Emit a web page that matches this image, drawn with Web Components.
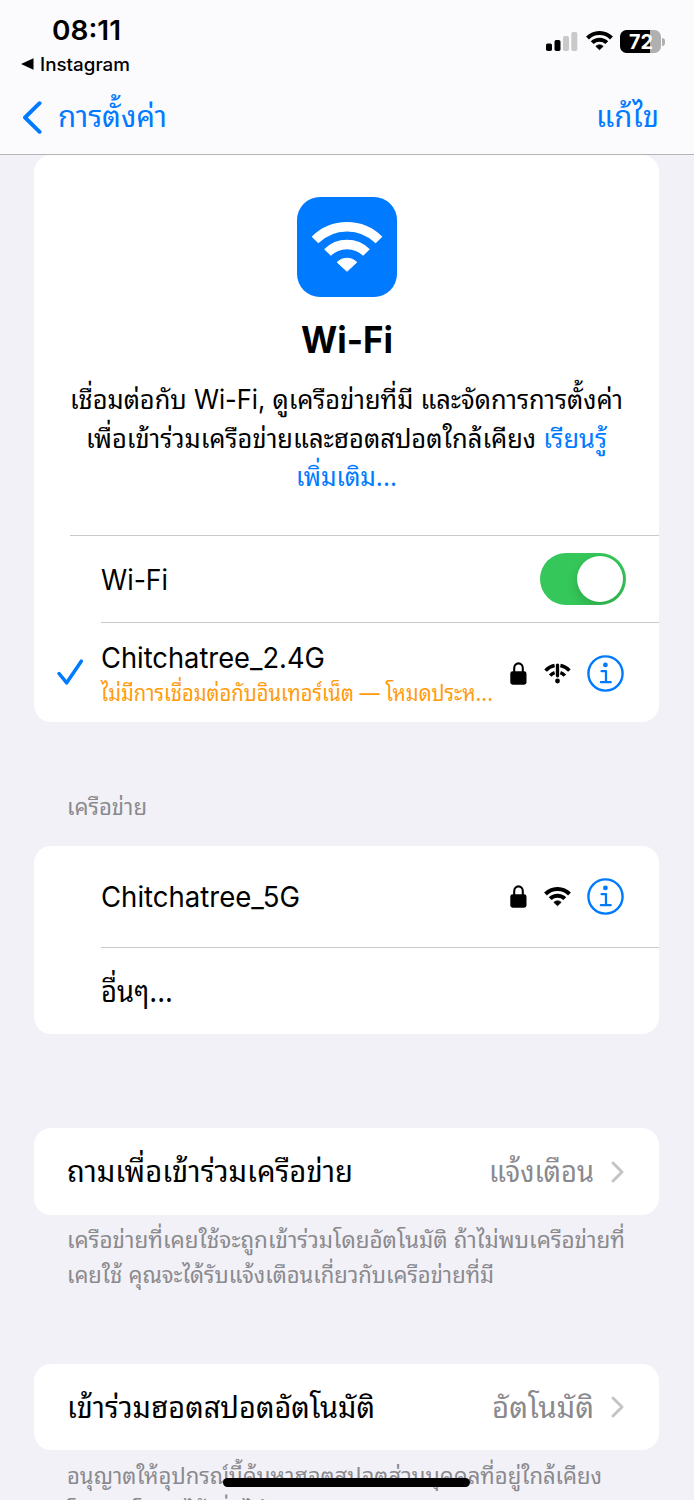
<!DOCTYPE html>
<html lang="th">
<head>
<meta charset="utf-8">
<title>Wi-Fi</title>
<style>
html,body{margin:0;padding:0;background:#f2f1f7;overflow:hidden}
body{height:1500px;width:694px}
</style>
</head>
<body>
<settings-app></settings-app>
<script>
const define = (name, html, init) => {
  const t = document.createElement('template');
  t.innerHTML = html;
  customElements.define(name, class extends HTMLElement {
    connectedCallback() {
      if (this.shadowRoot) return;
      this.attachShadow({mode: 'open'}).append(t.content.cloneNode(true));
      if (init) init(this, this.shadowRoot);
    }
  });
};

/* One line of text on a fixed baseline: base = distance from the box top, w = advance width. */
define('text-line', `<style>
:host{display:flex;align-items:baseline;white-space:nowrap;line-height:0;flex:none}
i{flex:none;width:0}
span{display:block;flex:none;transform-origin:0 0;white-space:pre}
</style><i></i><span><slot></slot></span>`, (el, root) => {
  const span = root.querySelector('span');
  const w = +el.getAttribute('w');
  root.querySelector('i').style.height = el.getAttribute('base') + 'px';
  el.style.height = (el.getAttribute('h') || el.getAttribute('base')) + 'px';
  el.style.fontSize = el.getAttribute('size') + 'px';
  el.style.width = w + 'px';
  span.style.transform = 'scaleX(' + w / span.getBoundingClientRect().width + ')';
});

define('wifi-glyph', `<style>:host{display:block;width:27px;height:20px;flex:none}svg{display:block;width:100%;height:100%}
path{stroke-width:10.8}.dot{stroke-width:2}
:host([large]) path{stroke-width:9.4}:host([large]) .dot{stroke-width:1}</style>
<svg viewBox="-36 -50 72 52" fill="none" stroke="currentColor">
<path d="M-32 -32A45.2 45.2 0 0 1 32 -32"/><path d="M-19.5 -19.5A27.6 27.6 0 0 1 19.5 -19.5"/>
<path class="dot" stroke-linejoin="round" fill="currentColor" d="M-9.8 -9.8A14 14 0 0 1 9.8 -9.8L0 -.7Z"/></svg>`);

define('wifi-alert-glyph', `<style>:host{display:block;width:27px;height:21px;flex:none}svg{display:block}</style>
<svg width="27" height="21" viewBox="0 0 27 21" fill="none" stroke="#000">
<g stroke-width="3.5"><path d="M1.6 7.6Q5.4 3.5 10.6 2.5M25.4 7.6Q21.6 3.5 16.4 2.5"/><path d="M6.2 12.6Q8 10.5 10.6 9.6M20.8 12.6Q19 10.5 16.4 9.6"/></g>
<path stroke-width="3.3" stroke-linecap="round" d="M13.5 2.1V12.8"/><circle cx="13.5" cy="18" r="2.4" fill="#000" stroke="none"/></svg>`);

define('lock-glyph', `<style>:host{display:block;width:17px;height:23px;flex:none}svg{display:block}</style>
<svg width="17" height="23" viewBox="0 0 17 23"><path d="M4.2 11V6.2a4.3 4.8 0 0 1 8.6 0V11" fill="none" stroke="#000" stroke-width="2.1"/><rect x=".3" y="9.3" width="16.2" height="13.4" rx="2.4"/></svg>`);

define('info-button', `<style>:host{display:block;width:37px;height:37px;flex:none}svg{display:block}</style>
<svg width="37" height="37" viewBox="0 0 37 37" fill="none" stroke="#007aff"><circle cx="18.5" cy="18.5" r="17.1" stroke-width="2.4"/><circle cx="18.4" cy="9.9" r="2.4" fill="#007aff" stroke="none"/><path d="M14.6 16.2H19V27.2M13.9 27.2H23.7" stroke-width="2.3" stroke-linejoin="round" stroke-linecap="round"/></svg>`);

define('check-glyph', `<style>:host{display:block;width:27px;height:27px;flex:none}svg{display:block}</style>
<svg width="27" height="27" viewBox="0 0 27 27"><path d="M2 14.5L9.7 23.8L24.3 2.2" fill="none" stroke="#007aff" stroke-width="3.5" stroke-linecap="round" stroke-linejoin="round"/></svg>`);

define('chevron-glyph', `<style>:host{display:block;width:13px;height:22px;flex:none}svg{display:block}</style>
<svg width="13" height="22" viewBox="0 0 13 22"><path d="M2 2L11 11L2 20" fill="none" stroke="#c4c4c7" stroke-width="2.9" stroke-linecap="round" stroke-linejoin="round"/></svg>`);

define('toggle-switch', `<style>:host{display:flex;box-sizing:border-box;width:86px;height:52px;border-radius:26px;background:#35c759;padding:3px;justify-content:flex-end;flex:none;overflow:hidden}
b{width:46px;height:46px;border-radius:50%;background:#fff;box-shadow:0 5px 12px rgba(0,0,0,.15),0 0 2px rgba(0,0,0,.06)}</style><b></b>`);

define('status-bar', `<style>
:host{display:flex;justify-content:space-between;height:84px;color:#000}
.left{display:flex;flex-direction:column}
.time{margin-left:52px;font-weight:600}
.back{display:flex;padding-left:21px;gap:6px}
.back svg{margin-top:18px}
.app{font-weight:500}
.right{display:flex;padding:30px 29px 0 0;height:23px;align-items:flex-start}
.bars{margin-top:2px;margin-right:8px}
wifi-glyph{margin:1px 7px 0 0}
.bat{display:flex}
.cell{display:flex;justify-content:center;width:41px;height:23px;border-radius:6.5px;background:linear-gradient(90deg,#000 29.5px,#b0b0b0 29.5px);color:#fff;font-weight:700}
.tip{width:3px;height:8px;margin:8px 0 0 1px;border-radius:0 4px 4px 0;background:#b0b0b0}
</style>
<div class="left"><text-line class="time" base="40" h="40" size="27" w="69">08:11</text-line>
<div class="back"><svg width="13" height="12"><path d="M0 6L12.5 .3V11.7Z"/></svg><text-line class="app" base="30.5" h="44" size="18" w="90">Instagram</text-line></div></div>
<div class="right"><svg class="bars" width="32" height="20"><rect y="11.5" width="6" height="7.5" rx="1.7"/><rect x="8.5" y="8" width="6" height="11" rx="1.7"/><g fill="#c9c9ca"><rect x="17" y="4" width="6" height="15" rx="1.7"/><rect x="25.3" width="6" height="19" rx="1.7"/></g></svg>
<wifi-glyph></wifi-glyph><div class="bat"><div class="cell"><text-line base="18.6" h="23" size="20" w="24">72</text-line></div><div class="tip"></div></div></div>`);

define('nav-bar', `<style>
:host{display:flex;box-sizing:border-box;justify-content:space-between;height:71px;border-bottom:1px solid #b4b4b7;color:#007aff;padding:0 35px 0 22px}
.back{display:flex;gap:16px}svg{margin-top:17px}
</style><div class="back"><svg width="20" height="33" viewBox="0 0 20 33"><path d="M17.6 2.2L3 16.5L17.6 30.8" fill="none" stroke="#007aff" stroke-width="3.9" stroke-linecap="round" stroke-linejoin="round"/></svg>
<text-line base="43" h="70" size="30" w="109">การตั้งค่า</text-line></div><text-line base="43" h="70" size="30" w="63">แก้ไข</text-line>`);

define('settings-card', `<style>:host{display:block;margin:0 35px 0 34px;background:#fff;border-radius:17px;overflow:hidden}</style><slot></slot>`);

define('wifi-intro', `<style>
:host{display:flex;flex-direction:column;align-items:center;height:380px;color:#000}
.tile{display:flex;justify-content:center;width:100px;height:100px;margin-top:42px;border-radius:23px;background:#007aff;color:#fff}
.tile wifi-glyph{width:72px;height:52px;margin-top:25px}
.title{font-weight:700}
em{font-style:normal;color:#007aff}
</style>
<div class="tile"><wifi-glyph large></wifi-glyph></div>
<text-line class="title" base="55.5" h="75" size="36.5" w="92">Wi-Fi</text-line>
<text-line base="37" h="38.5" size="26.7" w="553">เชื่อมต่อกับ Wi-Fi, ดูเครือข่ายที่มี และจัดการการตั้งค่า</text-line>
<text-line base="37" h="38.5" size="26.7" w="521">เพื่อเข้าร่วมเครือข่ายและฮอตสปอตใกล้เคียง <em>เรียนรู้</em></text-line>
<text-line base="37" h="38.5" size="26.7" w="101"><em>เพิ่มเติม...</em></text-line>`);

define('settings-row', `<style>
:host{display:flex;align-items:flex-start;box-sizing:border-box;color:#000}
.lead{width:67px;flex:none;display:flex;padding-left:23px;box-sizing:border-box}
:host([plain]) .lead{width:33px}
.main{flex:1;height:100%;display:flex;justify-content:space-between;box-sizing:border-box;padding-right:35px}
:host([line]) .main{border-bottom:1px solid #c9c9cc}
.end{display:flex;align-items:center;height:100%}
</style><div class="lead"><slot name="lead"></slot></div><div class="main"><div><slot></slot></div><div class="end"><slot name="end"></slot></div></div>`, el => { el.style.height = el.getAttribute('h') + 'px'; });

define('settings-app', `<style>
:host{display:block;width:694px;height:1500px;overflow:hidden;position:relative;background:#f2f1f7;font-family:Inter,"Noto Sans Thai Looped",Loma,Waree,Garuda,"Noto Sans Thai","Noto Sans",sans-serif;color:#000}
header{background:#fbfbfd}
.rule{height:1px;background:#c9c9cc;margin-left:36px}
.grey{color:#8a8a8e}.note{margin-left:67px}
.lbl{margin:0 0 22px 67px}
.warn{color:#ff9b0a}
check-glyph{margin-top:36px}
.net{display:flex;align-items:center}
.low{padding-top:1px}
lock-glyph{margin-right:17px}
.net info-button{margin-left:16px}
.opt{display:flex;align-items:center;gap:17px;height:100%}
.home{position:absolute;left:223px;top:1478px;width:247px;height:9px;border-radius:5px;background:#000}
</style>
<header><status-bar></status-bar><nav-bar></nav-bar></header>
<settings-card><wifi-intro></wifi-intro><div class="rule"></div>
<settings-row h="87" line><text-line base="54" size="28.5" w="67">Wi-Fi</text-line><toggle-switch slot="end" style="margin-right:-2px"></toggle-switch></settings-row>
<settings-row h="99"><check-glyph slot="lead"></check-glyph><text-line base="45" size="28.5" w="224">Chitchatree_2.4G</text-line><text-line class="warn" base="33" size="22.5" w="392">ไม่มีการเชื่อมต่อกับอินเทอร์เน็ต — โหมดประห...</text-line>
<div class="net low" slot="end"><lock-glyph></lock-glyph><wifi-alert-glyph></wifi-alert-glyph><info-button></info-button></div></settings-row></settings-card>
<text-line class="grey lbl" base="93" h="102" size="23" w="80">เครือข่าย</text-line>
<settings-card><settings-row h="102" line><text-line base="61" size="28.5" w="199">Chitchatree_5G</text-line>
<div class="net" slot="end"><lock-glyph></lock-glyph><wifi-glyph></wifi-glyph><info-button></info-button></div></settings-row>
<settings-row h="86"><text-line base="54" size="30" w="72">อื่นๆ...</text-line></settings-row></settings-card>
<div style="height:94px"></div>
<settings-card><settings-row h="87" plain><text-line base="54" size="30" w="286">ถามเพื่อเข้าร่วมเครือข่าย</text-line><div class="opt" slot="end"><text-line class="grey" base="54" h="87" size="30" w="105">แจ้งเตือน</text-line><chevron-glyph></chevron-glyph></div></settings-row></settings-card>
<text-line class="grey note" base="33" h="33" size="23" w="558">เครือข่ายที่เคยใช้จะถูกเข้าร่วมโดยอัตโนมัติ ถ้าไม่พบเครือข่ายที่</text-line>
<text-line class="grey note" base="35" h="116" size="23" w="427">เคยใช้ คุณจะได้รับแจ้งเตือนเกี่ยวกับเครือข่ายที่มี</text-line>
<settings-card><settings-row h="86" plain><text-line base="54" size="30" w="308">เข้าร่วมฮอตสปอตอัตโนมัติ</text-line><div class="opt" slot="end"><text-line class="grey" base="54" h="86" size="30" w="102">อัตโนมัติ</text-line><chevron-glyph></chevron-glyph></div></settings-row></settings-card>
<text-line class="grey note" base="34" h="34" size="23" w="535">อนุญาตให้อุปกรณ์นี้ค้นหาฮอตสปอตส่วนบุคคลที่อยู่ใกล้เคียง</text-line>
<text-line class="grey note" base="35" size="23" w="213">โดยอัตโนมัติได้เมื่อไม่มี</text-line>
<div class="home"></div>`);
</script>
</body>
</html>
